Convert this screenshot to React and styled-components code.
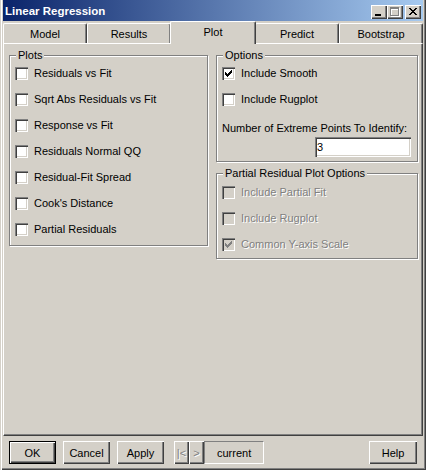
import React from 'react';
import styled, { createGlobalStyle, css } from 'styled-components';

const face = '#d4d0c8';
const shadow = '#808080';
const darkShadow = '#404040';

const GlobalStyle = createGlobalStyle`
  html, body {
    margin: 0;
    padding: 0;
    background: ${face};
  }
  body {
    font-family: "Liberation Sans", Arial, sans-serif;
    font-size: 11px;
    color: #000;
  }
  * {
    box-sizing: border-box;
  }
`;

const disabledText = css`
  color: ${shadow};
  text-shadow: 1px 1px 0 #fff;
`;

const raised = css`
  box-shadow: inset 1px 1px #fff, inset -1px -1px ${darkShadow}, inset -2px -2px ${shadow};
`;

const Window = styled.div`
  width: 426px;
  height: 470px;
  display: flex;
  flex-direction: column;
  padding: 0 3px 3px 3px;
  background: ${face};
  box-shadow: inset 1px 0 ${face}, inset 2px 0 #fff, inset -1px -1px ${darkShadow},
    inset -2px -2px ${shadow};
`;

const TitleBar = styled.div`
  flex: none;
  height: 21px;
  display: flex;
  align-items: center;
  padding: 1px 2px 0 2px;
  background: linear-gradient(to right, #0a246a, #a6caf0);
  color: #fff;
  font-weight: bold;
  font-size: 11.5px;
`;

const CaptionButtons = styled.div`
  margin-left: auto;
  align-self: flex-end;
  margin-bottom: 2px;
  display: flex;
`;

const CaptionButton = styled.div`
  width: 16px;
  height: 14px;
  margin-left: ${p => p.$gap || 0}px;
  background: ${face};
  ${raised}
  svg {
    display: block;
  }
`;

const TabStrip = styled.div`
  flex: none;
  height: 22px;
  display: flex;
  align-items: flex-end;
  position: relative;
  z-index: 1;
`;

const Tab = styled.div`
  flex: none;
  width: ${p => (p.$active ? 86 : 84)}px;
  height: ${p => (p.$active ? 23 : 20)}px;
  margin: ${p => (p.$active ? '0 -1px -1px' : '0')};
  padding-bottom: ${p => (p.$active ? 3 : 0)}px;
  display: flex;
  align-items: center;
  justify-content: center;
  background: ${face};
  border-top: 1px solid #fff;
  border-left: 1px solid #fff;
  border-right: 1px solid ${darkShadow};
  border-radius: 2px 2px 0 0;
  box-shadow: inset -1px 0 ${shadow};
  position: relative;
  z-index: ${p => (p.$active ? 2 : 1)};
`;

const Panel = styled.div`
  flex: none;
  height: 393px;
  border-top: 1px solid #fff;
  border-left: 1px solid #fff;
  border-right: 1px solid ${darkShadow};
  border-bottom: 1px solid ${darkShadow};
  box-shadow: inset -1px -1px ${shadow};
  padding: 7px 5px;
  display: grid;
  grid-template-columns: 199px 202px;
  column-gap: 8px;
  align-items: start;
`;

const Column = styled.div`
  display: flex;
  flex-direction: column;
  gap: 7px;
`;

const Group = styled.fieldset`
  margin: 0;
  min-width: 0;
  padding: ${p => p.$pad || '0 5px 3px'};
  border: 1px solid ${shadow};
  box-shadow: 1px 1px 0 #fff, inset 1px 1px 0 #fff;
`;

const Legend = styled.legend`
  padding: 0 2px;
  margin-left: 1px;
  height: 9px;
  line-height: 9px;
  background: ${face};
`;

const CheckRow = styled.label`
  display: flex;
  align-items: center;
  gap: 6px;
  height: 26px;
  white-space: nowrap;
  ${p => p.$disabled && disabledText}
`;

const Box = styled.span`
  flex: none;
  width: 13px;
  height: 13px;
  background: ${p => (p.$disabled ? face : '#fff')};
  box-shadow: inset 1px 1px ${shadow}, inset 2px 2px ${darkShadow}, inset -1px -1px #fff,
    inset -2px -2px ${face};
  svg {
    display: block;
  }
`;

const Caption = styled.div`
  margin-top: 10px;
  line-height: 13px;
  white-space: nowrap;
`;

const FieldRow = styled.div`
  display: flex;
  justify-content: flex-end;
  margin-top: 2px;
`;

const NumberField = styled.input`
  width: 96px;
  height: 20px;
  margin: 0;
  padding: 0 2px;
  border: none;
  background: #fff;
  font: inherit;
  color: #000;
  outline: none;
  box-shadow: inset 1px 1px ${shadow}, inset 2px 2px ${darkShadow}, inset -1px -1px #fff,
    inset -2px -2px ${face};
`;

const Footer = styled.div`
  flex: 1;
  display: flex;
  align-items: flex-start;
  padding: 5px 6px 0 6px;
`;

const Button = styled.div`
  flex: none;
  width: ${p => p.$w || 47}px;
  height: 23px;
  margin-left: ${p => p.$ml || 0};
  display: flex;
  align-items: center;
  justify-content: center;
  background: ${face};
  ${raised}
  ${p =>
    p.$default &&
    css`
      border: 1px solid #000;
    `}
  ${p => p.$disabled && disabledText}
`;

const CurrentBox = styled.div`
  flex: none;
  width: 60px;
  height: 23px;
  display: flex;
  align-items: center;
  padding-left: 12px;
  border-top: 1px solid ${shadow};
  border-left: 1px solid ${shadow};
  border-right: 1px solid #fff;
  border-bottom: 1px solid #fff;
`;

// pixel-art helper: each string row, '#' = filled pixel
const Pixels = ({ rows, x, y, fill }) => (
  <>
    {rows.map((row, r) =>
      row.split('').map((c, i) =>
        c === '#' ? <rect key={`${r}-${i}`} x={x + i} y={y + r} width="1" height="1" fill={fill} /> : null
      )
    )}
  </>
);

const closeGlyph = ['##....##', '.##..##.', '..####..', '...##...', '..####..', '.##..##.', '##....##'];
const checkGlyph = ['......#', '.....##', '#...###', '##.###.', '#####..', '.###...', '..#....'];

const CheckBox = ({ checked, disabled, children }) => (
  <CheckRow $disabled={disabled}>
    <Box $disabled={disabled}>
      {checked && (
        <svg width="13" height="13" shapeRendering="crispEdges">
          <Pixels rows={checkGlyph} x={3} y={3} fill={disabled ? shadow : '#000'} />
        </svg>
      )}
    </Box>
    <span>{children}</span>
  </CheckRow>
);

const tabs = ['Model', 'Results', 'Plot', 'Predict', 'Bootstrap'];
const plots = [
  'Residuals vs Fit',
  'Sqrt Abs Residuals vs Fit',
  'Response vs Fit',
  'Residuals Normal QQ',
  'Residual-Fit Spread',
  "Cook's Distance",
  'Partial Residuals',
];

export default function App() {
  return (
    <>
      <GlobalStyle />
      <Window>
        <TitleBar>
          <span>Linear Regression</span>
          <CaptionButtons>
            <CaptionButton>
              <svg width="16" height="14" shapeRendering="crispEdges">
                <rect x="4" y="9" width="6" height="2" fill="#000" />
              </svg>
            </CaptionButton>
            <CaptionButton>
              <svg width="16" height="14" shapeRendering="crispEdges">
                <g fill="none" stroke="#fff" strokeWidth="1">
                  <rect x="4.5" y="3.5" width="8" height="8" />
                  <line x1="4" y1="4.5" x2="13" y2="4.5" />
                </g>
                <g fill="none" stroke={shadow} strokeWidth="1">
                  <rect x="3.5" y="2.5" width="8" height="8" />
                  <line x1="3" y1="3.5" x2="12" y2="3.5" />
                </g>
              </svg>
            </CaptionButton>
            <CaptionButton $gap={2}>
              <svg width="16" height="14" shapeRendering="crispEdges">
                <Pixels rows={closeGlyph} x={4} y={3} fill="#000" />
              </svg>
            </CaptionButton>
          </CaptionButtons>
        </TitleBar>

        <TabStrip>
          {tabs.map(t => (
            <Tab key={t} $active={t === 'Plot'}>
              {t}
            </Tab>
          ))}
        </TabStrip>

        <Panel>
          <Group>
            <Legend>Plots</Legend>
            {plots.map(p => (
              <CheckBox key={p}>{p}</CheckBox>
            ))}
          </Group>

          <Column>
            <Group $pad="0 6px 4px 5px">
              <Legend>Options</Legend>
              <CheckBox checked>Include Smooth</CheckBox>
              <CheckBox>Include Rugplot</CheckBox>
              <Caption>Number of Extreme Points To Identify:</Caption>
              <FieldRow>
                <NumberField defaultValue="3" />
              </FieldRow>
            </Group>

            <Group $pad="1px 5px 1px">
              <Legend>Partial Residual Plot Options</Legend>
              <CheckBox disabled>Include Partial Fit</CheckBox>
              <CheckBox disabled>Include Rugplot</CheckBox>
              <CheckBox disabled checked>
                Common Y-axis Scale
              </CheckBox>
            </Group>
          </Column>
        </Panel>

        <Footer>
          <Button $default>OK</Button>
          <Button $ml="7px">Cancel</Button>
          <Button $ml="7px">Apply</Button>
          <Button $ml="10px" $w={15} $disabled>
            |&lt;
          </Button>
          <Button $w={15} $disabled>
            &gt;
          </Button>
          <CurrentBox>current</CurrentBox>
          <Button $ml="auto" $w={48}>
            Help
          </Button>
        </Footer>
      </Window>
    </>
  );
}
